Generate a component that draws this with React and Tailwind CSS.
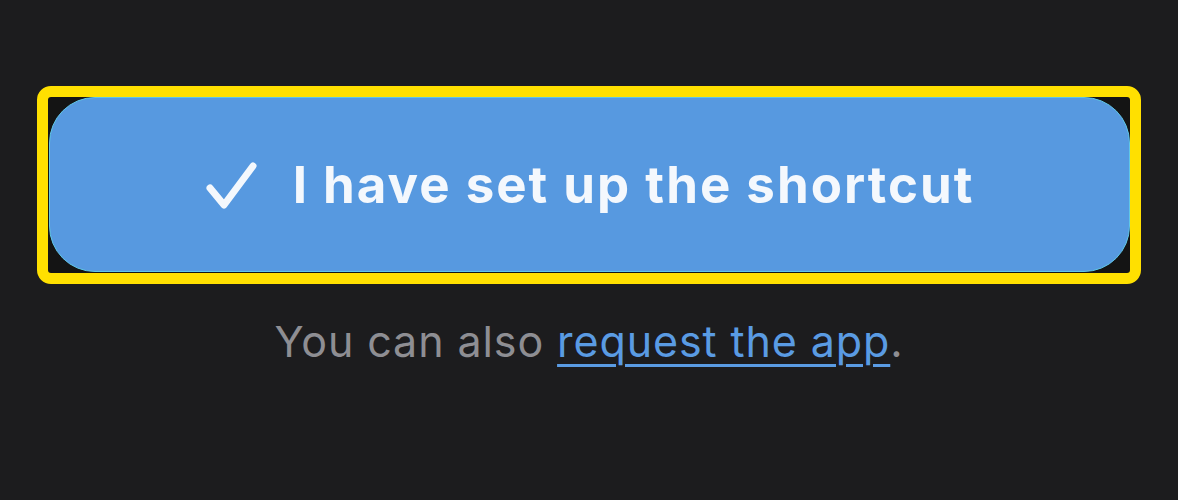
export default function App() {
  return (
    <div className="w-[1178px] h-[500px] bg-[#1c1c1e] flex flex-col items-center overflow-hidden" style={{ fontFamily: "Inter, 'Noto Sans', sans-serif" }}>
      <div className="mt-[86px] w-[1104px] h-[198px] border-[11px] border-[#ffe000] rounded-[14px] bg-[#141414] flex">
        <button className="flex-1 m-0 ml-[1px] mb-[1px] rounded-[46px] bg-[#5799e0] border border-[#5fc6e6] flex items-center justify-center gap-[34px] text-white">
          <svg width="54" height="50" viewBox="0 0 54 50" className="mt-[2px]">
            <path d="M5 27 L19 44 L48 5" fill="none" stroke="#f4f8fd" strokeWidth="7" strokeLinecap="round" strokeLinejoin="round" />
          </svg>
          <span className="text-[51px] font-bold tracking-[2px] text-[#f4f8fd] leading-none">I have set up the shortcut</span>
        </button>
      </div>
      <div className="mt-[36px] text-[43px] leading-none text-[#8e8e93] tracking-[0.9px]">
        You can also <a className="text-[#5a9be3] underline decoration-[3px] underline-offset-[7px]">request the app</a>.
      </div>
    </div>
  );
}
